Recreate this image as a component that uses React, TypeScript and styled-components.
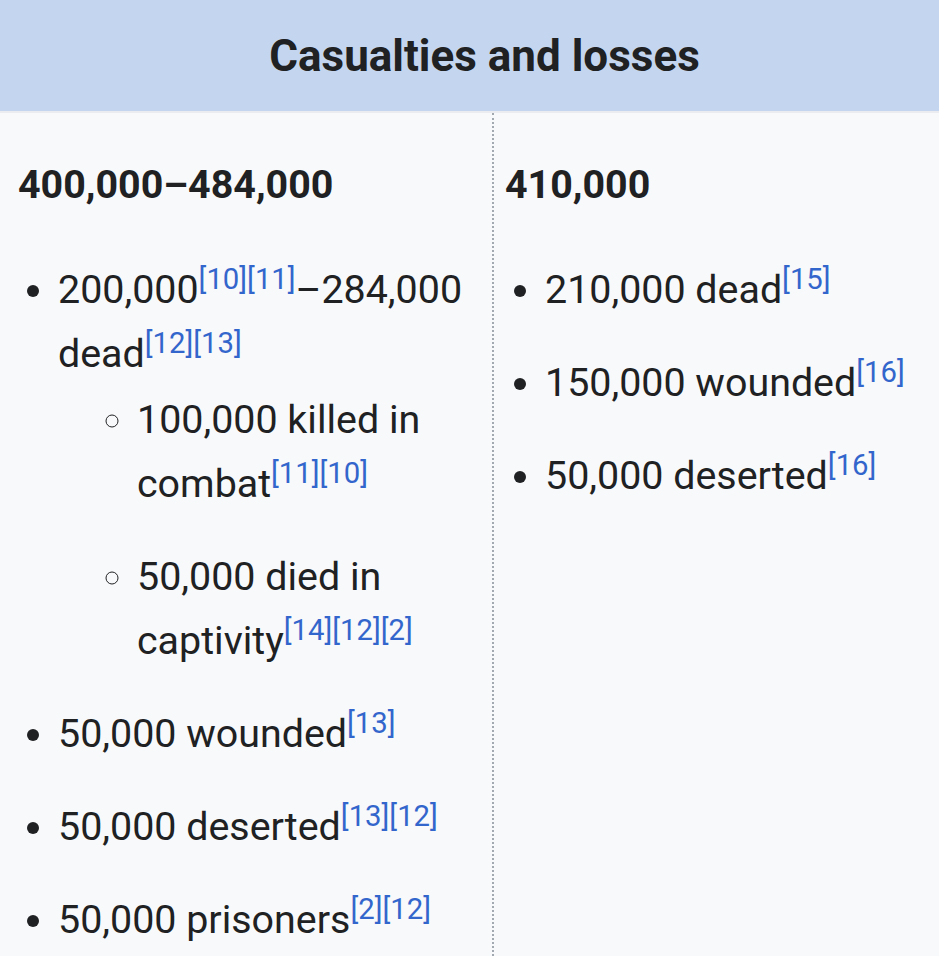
import React, { FC } from 'react';
import styled, { createGlobalStyle } from 'styled-components';

type Ref = string;

type Entry = {
  text: string;
  refs?: Ref[];
  after?: { text: string; refs?: Ref[] };
  children?: Entry[];
};

type Side = {
  total: string;
  entries: Entry[];
};

const GlobalStyle = createGlobalStyle`
  html, body {
    margin: 0;
    padding: 0;
    background: #f8f9fa;
  }
  body {
    font-family: Roboto, "Liberation Sans", sans-serif;
    color: #202122;
  }
`;

const Box = styled.div`
  width: 939px;
  min-height: 956px;
  background: #f8f9fa;
  overflow: hidden;
`;

const Header = styled.div`
  height: 111px;
  display: flex;
  align-items: center;
  justify-content: center;
  padding-left: 30px;
  background: #c4d6ef;
  border-bottom: 2px solid #eaecf0;
  font-size: 44px;
  font-weight: 700;
  color: #202122;
`;

const Columns = styled.div`
  display: grid;
  grid-template-columns: 492px 1fr;
  min-height: 843px;
`;

const Cell = styled.div<{ $divider?: boolean }>`
  padding: 40px 12px 0 ${(p) => (p.$divider ? '11px' : '18px')};
  border-left: ${(p) => (p.$divider ? '2px dotted #a2a9b1' : 'none')};
  font-size: 39.4px;
  line-height: 64px;
`;

const Total = styled.div`
  font-weight: 700;
`;

const List = styled.ul<{ $nested?: boolean }>`
  margin: ${(p) => (p.$nested ? '2px 0 0' : '41px 0 0')};
  padding-left: ${(p) => (p.$nested ? '79px' : '40px')};
  list-style-type: ${(p) => (p.$nested ? 'circle' : 'disc')};
`;

const Item = styled.li`
  margin-bottom: 29px;

  &:last-child {
    margin-bottom: 0;
  }

  ul & {
    margin-bottom: 29px;
  }
`;

const Sup = styled.sup`
  font-size: 29.3px;
  line-height: 1;
  vertical-align: 14px;
`;

const RefLink = styled.a`
  color: #3366cc;
  text-decoration: none;
`;

const Refs: FC<{ refs?: Ref[] }> = ({ refs }) =>
  refs && refs.length ? (
    <Sup>
      {refs.map((r) => (
        <RefLink key={r} href="#">
          [{r}]
        </RefLink>
      ))}
    </Sup>
  ) : null;

const EntryItem: FC<{ entry: Entry }> = ({ entry }) => (
  <Item>
    {entry.text}
    <Refs refs={entry.refs} />
    {entry.after && (
      <>
        {entry.after.text}
        <Refs refs={entry.after.refs} />
      </>
    )}
    {entry.children && (
      <List $nested>
        {entry.children.map((c, i) => (
          <EntryItem key={i} entry={c} />
        ))}
      </List>
    )}
  </Item>
);

const sides: Side[] = [
  {
    total: '400,000–484,000',
    entries: [
      {
        text: '200,000',
        refs: ['10', '11'],
        after: { text: '–284,000 dead', refs: ['12', '13'] },
        children: [
          { text: '100,000 killed in combat', refs: ['11', '10'] },
          { text: '50,000 died in captivity', refs: ['14', '12', '2'] },
        ],
      },
      { text: '50,000 wounded', refs: ['13'] },
      { text: '50,000 deserted', refs: ['13', '12'] },
      { text: '50,000 prisoners', refs: ['2', '12'] },
    ],
  },
  {
    total: '410,000',
    entries: [
      { text: '210,000 dead', refs: ['15'] },
      { text: '150,000 wounded', refs: ['16'] },
      { text: '50,000 deserted', refs: ['16'] },
    ],
  },
];

export default function App() {
  return (
    <>
      <GlobalStyle />
      <Box>
        <Header>Casualties and losses</Header>
        <Columns>
          {sides.map((side, i) => (
            <Cell key={i} $divider={i > 0}>
              <Total>{side.total}</Total>
              <List>
                {side.entries.map((e, j) => (
                  <EntryItem key={j} entry={e} />
                ))}
              </List>
            </Cell>
          ))}
        </Columns>
      </Box>
    </>
  );
}
